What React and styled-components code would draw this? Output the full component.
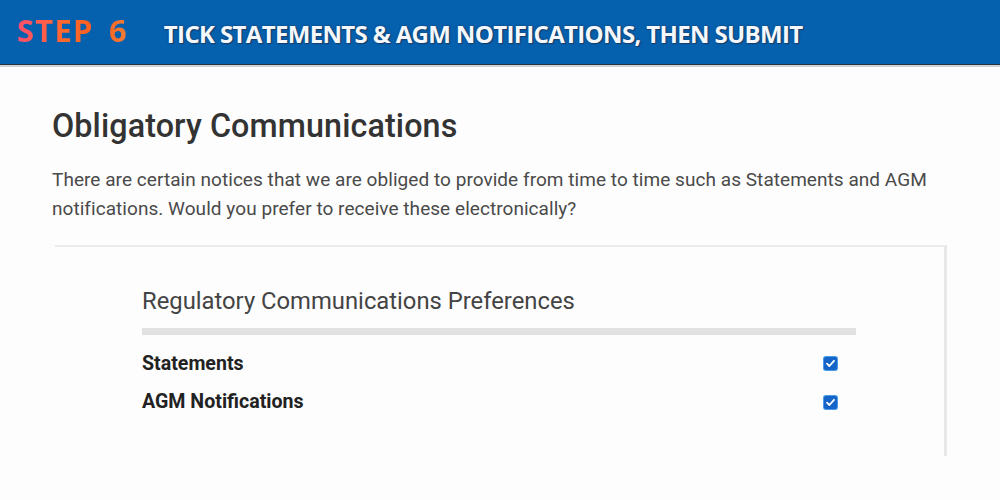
import React from "react";
import styled, { createGlobalStyle } from "styled-components";

const Global = createGlobalStyle`
  html, body { margin: 0; padding: 0; background: #fdfdfd; }
  body { font-family: Roboto, "Liberation Sans", sans-serif; }
`;

const Header = styled.header`
  height: 64px;
  background: #0560ad;
  display: flex;
  align-items: center;
  padding-left: 17px;
  gap: 37px;
  border-bottom: 1px solid #2a3440;
  box-shadow: 0 2px 0 #d4d4d4;
`;

const Step = styled.span`
  font-family: "Open Sans", sans-serif;
  font-weight: 700;
  font-size: 31px;
  letter-spacing: 1.2px;
  word-spacing: 6px;
  background: linear-gradient(90deg, #ff4f6e 0%, #ff6a2a 45%, #ff5a1e 75%, #f0803a 100%);
  -webkit-background-clip: text;
  background-clip: text;
  color: transparent;
  line-height: 1;
  margin-top: -3px;
  margin-right: -1px;
`;

const Title = styled.h1`
  margin: 0;
  font-family: "Open Sans", sans-serif;
  font-weight: 700;
  font-size: 24px;
  letter-spacing: -0.65px;
  color: #f4f8fc;
  text-shadow: 0 0 2px #163a66, 1px 1px 1px #1b3f6a;
  line-height: 1;
  margin-top: 4px;
`;

const Main = styled.main`
  padding: 42px 0 0 52px;
`;

const Heading = styled.h2`
  margin: 0;
  font-size: 32.3px;
  font-weight: 500;
  color: #333;
  line-height: 38px;
  letter-spacing: 0.1px;
`;

const Intro = styled.p`
  margin: 20px 0 0;
  width: 900px;
  font-size: 19px;
  line-height: 29px;
  letter-spacing: 0.05px;
  color: #4a4a4a;
`;

const Card = styled.section`
  margin: 22px 0 0 3px;
  width: 892px;
  height: 211px;
  border-top: 2px solid #ececec;
  border-right: 3px solid #e8e8e8;
  padding: 40px 0 0 87px;
  box-sizing: border-box;
`;

const CardTitle = styled.h3`
  margin: 0;
  width: 714px;
  font-size: 23.8px;
  font-weight: 400;
  color: #444;
  line-height: 28px;
  padding-bottom: 13px;
  border-bottom: 7px solid #e1e1e1;
`;

const Rows = styled.div`
  margin-top: 9px;
`;

const Row = styled.label`
  width: 714px;
  display: flex;
  align-items: center;
  justify-content: space-between;
  height: 38px;
`;

const RowLabel = styled.span`
  font-size: 19.6px;
  font-weight: 700;
  color: #222;
`;

const Box = styled.span`
  width: 13px;
  height: 13px;
  margin-right: 19px;
  margin-top: ${(p) => p.$offset}px;
  border-radius: 2px;
  background: #1565c8;
  box-shadow: 0 0 0 1px #4a9be8;
  display: flex;
  align-items: center;
  justify-content: center;
`;

function Check({ offset }) {
  return (
    <Box $offset={offset}>
      <svg width="11" height="11" viewBox="0 0 11 11">
        <path d="M2 5.6 L4.4 8 L9 2.8" fill="none" stroke="#fff" strokeWidth="1.8" strokeLinecap="round" strokeLinejoin="round" />
      </svg>
    </Box>
  );
}

export default function App() {
  return (
    <>
      <Global />
      <Header>
        <Step>STEP 6</Step>
        <Title>TICK STATEMENTS &amp; AGM NOTIFICATIONS, THEN SUBMIT</Title>
      </Header>
      <Main>
        <Heading>Obligatory Communications</Heading>
        <Intro>
          There are certain notices that we are obliged to provide from time to time such as Statements and AGM
          notifications. Would you prefer to receive these electronically?
        </Intro>
        <Card>
          <CardTitle>Regulatory Communications Preferences</CardTitle>
          <Rows>
            <Row>
              <RowLabel>Statements</RowLabel>
              <Check offset={0} />
            </Row>
            <Row>
              <RowLabel>AGM Notifications</RowLabel>
              <Check offset={2} />
            </Row>
          </Rows>
        </Card>
      </Main>
    </>
  );
}
